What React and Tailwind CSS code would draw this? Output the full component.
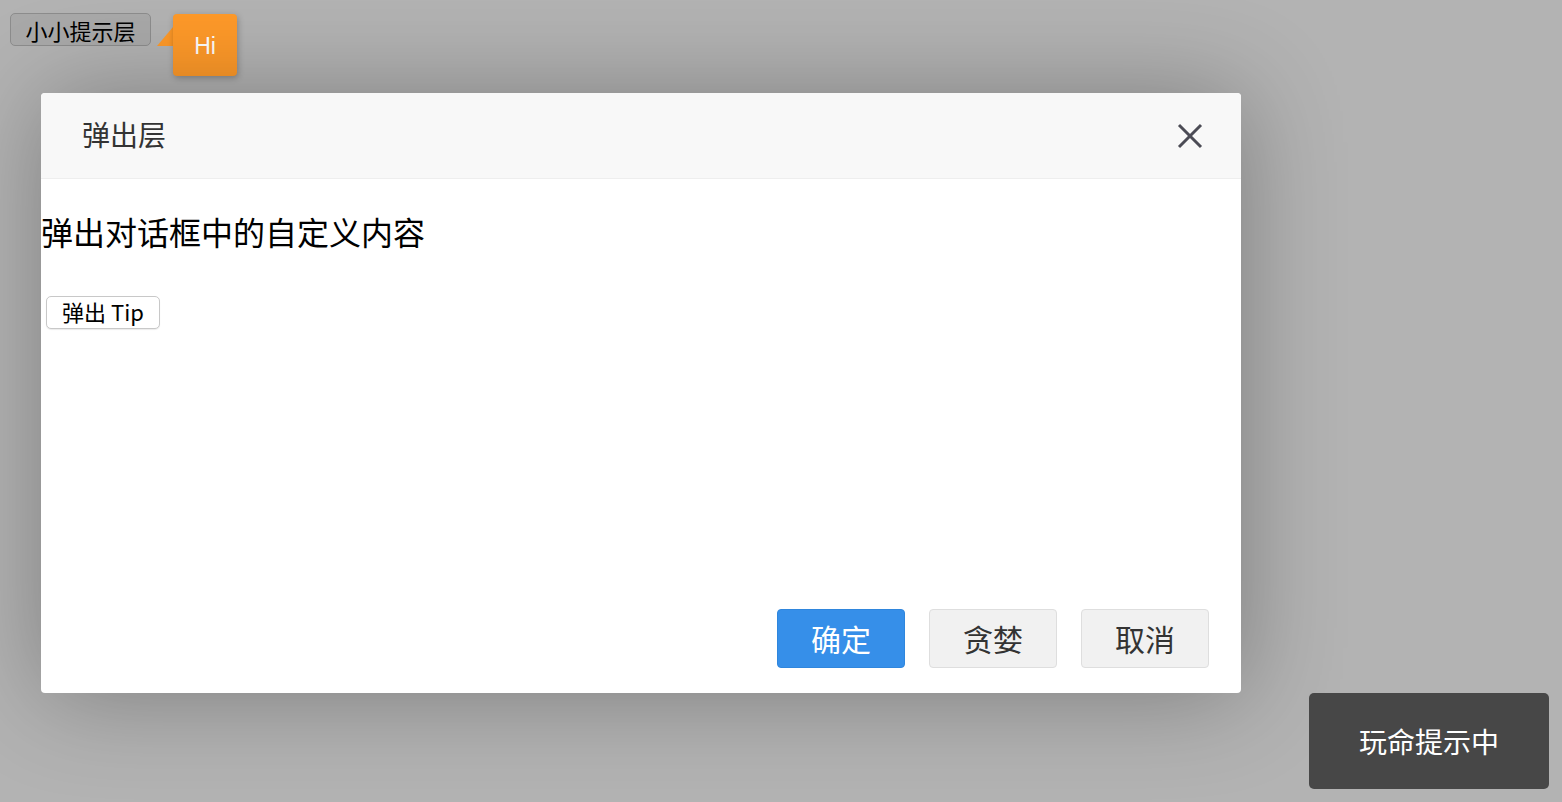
import React from "react";

const font = { fontFamily: '"Noto Sans CJK SC", "Noto Sans", sans-serif' };

export default function App() {
  return (
    <div
      className="relative w-[1562px] h-[802px] overflow-hidden bg-[#b3b3b3] pt-[13px] pl-[10px]"
      style={font}
    >
      {/* page button under mask */}
      <button className="w-[141px] h-[33px] rounded-[5px] border border-[#8d8d8d] bg-[#a9a9a9] text-[22px] leading-none text-black flex items-center justify-center">
        小小提示层
      </button>

      {/* tips */}
      <div className="absolute left-[157px] top-[14px] flex">
        <svg width="16" height="32" viewBox="0 0 16 32">
          <polygon points="16,13 0,32 16,32" fill="#ff9a29" />
        </svg>
        <div className="w-[64px] h-[62px] rounded-[4px] bg-[#ff9a29] shadow-[1px_2px_6px_rgba(0,0,0,0.25)] flex items-center justify-center pt-[2px] text-white text-[23px] leading-none font-light" style={{ fontFamily: '"Liberation Sans", "Noto Sans", sans-serif' }}>
          Hi
        </div>
      </div>

      {/* dialog */}
      <div className="absolute left-[41px] top-[93px] w-[1200px] h-[600px] rounded-[4px] bg-white shadow-[2px_2px_100px_rgba(0,0,0,0.3)] flex flex-col">
        <div className="h-[86px] shrink-0 rounded-t-[4px] bg-[#f8f8f8] border-b border-[#eeeeee] flex items-center justify-between pl-[41px] pr-[38px]">
          <span className="text-[28px] text-[#333333] leading-none pb-[3px]">弹出层</span>
          <svg width="26" height="26" viewBox="0 0 26 26">
            <line x1="2" y1="2" x2="24" y2="24" stroke="#4b4b55" strokeWidth="3" />
            <line x1="24" y1="2" x2="2" y2="24" stroke="#4b4b55" strokeWidth="3" />
          </svg>
        </div>
        <div className="flex flex-col items-start">
          <p className="mt-[28px] text-[32px] leading-[48px] text-black">弹出对话框中的自定义内容</p>
          <button className="mt-[41px] ml-[5px] w-[114px] h-[33px] rounded-[5px] border border-[#c8c8c8] bg-white text-[22px] leading-none text-black flex items-center justify-center pb-[3px] shadow-[0_1px_1px_rgba(0,0,0,0.08)]">
            弹出 Tip
          </button>
        </div>
        <div className="mt-auto flex justify-end gap-[24px] pr-[32px] pb-[25px]">
          <button className="w-[128px] h-[59px] rounded-[4px] border border-[#2f86dd] bg-[#368fe9] text-white text-[30px] leading-none flex items-center justify-center pb-[2px]">
            确定
          </button>
          <button className="w-[128px] h-[59px] rounded-[4px] border border-[#dedede] bg-[#f1f1f1] text-[#333333] text-[30px] leading-none flex items-center justify-center pb-[2px]">
            贪婪
          </button>
          <button className="w-[128px] h-[59px] rounded-[4px] border border-[#dedede] bg-[#f1f1f1] text-[#333333] text-[30px] leading-none flex items-center justify-center pb-[2px]">
            取消
          </button>
        </div>
      </div>

      {/* toast */}
      <div className="absolute left-[1309px] top-[693px] w-[240px] h-[96px] rounded-[5px] bg-[#474747] flex items-center justify-center text-white text-[28px] leading-none">
        玩命提示中
      </div>
    </div>
  );
}
